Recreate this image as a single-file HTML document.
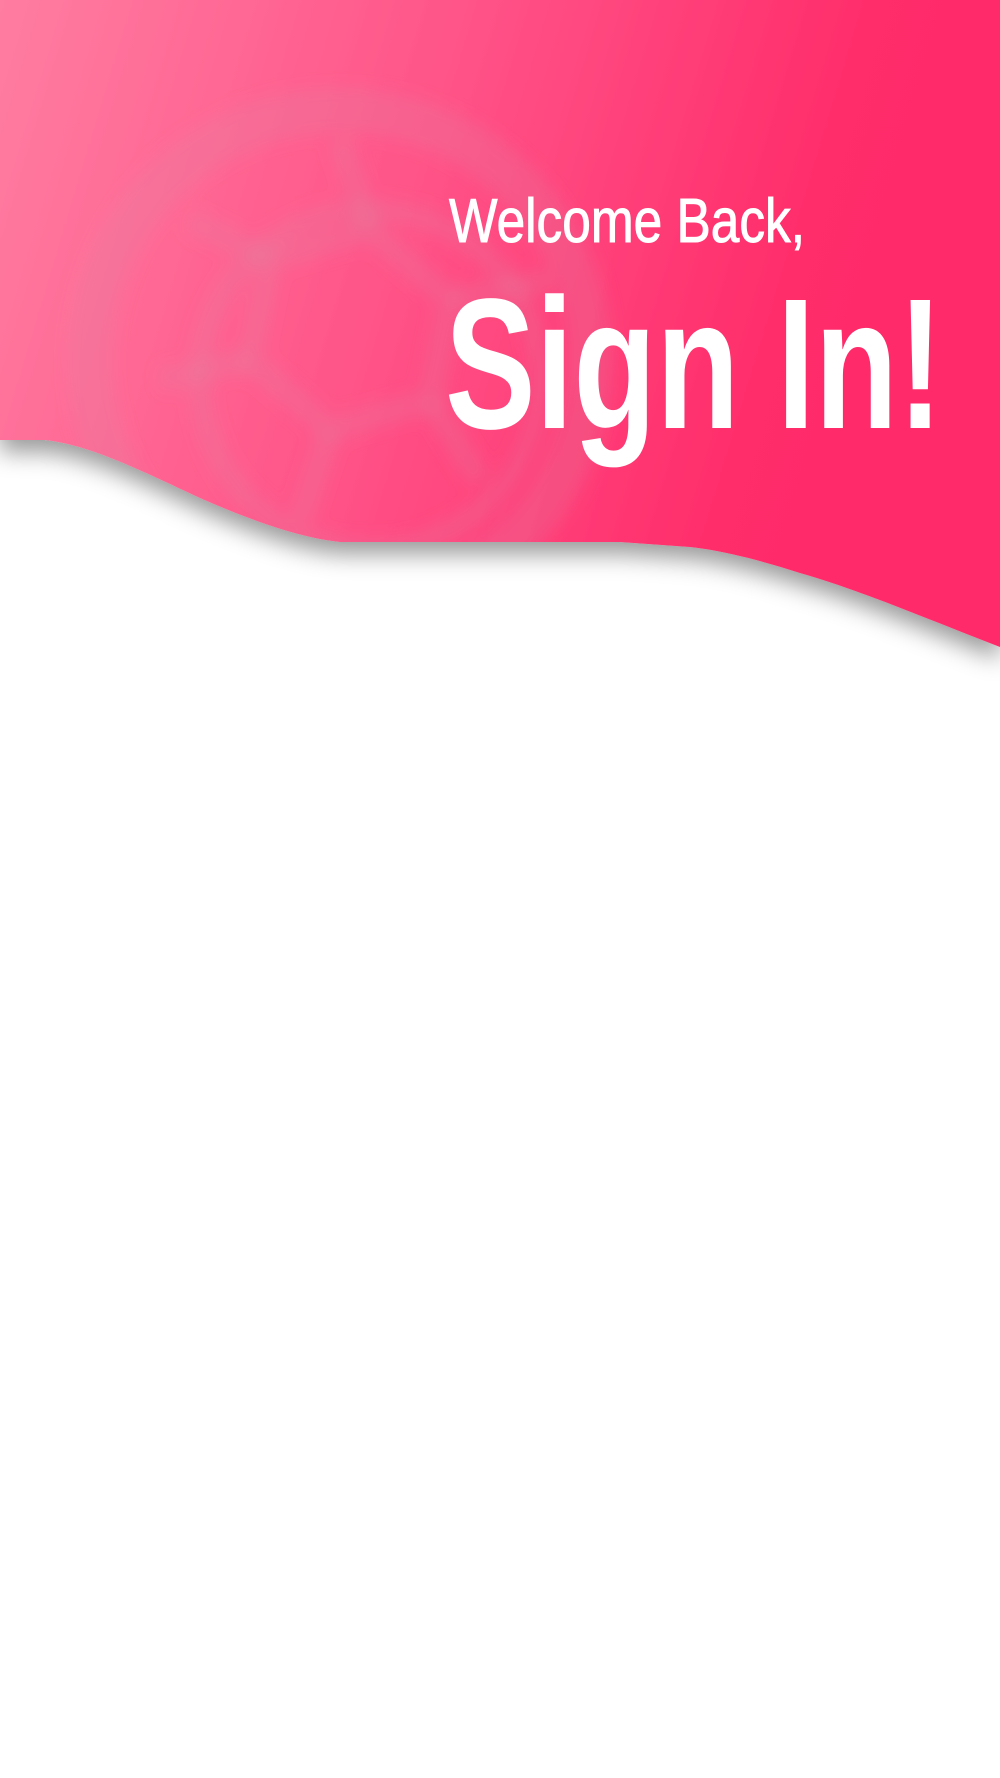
<!DOCTYPE html>
<html><head><meta charset="utf-8"><style>
html,body{margin:0;padding:0;background:#fff;width:1000px;height:1778px;overflow:hidden}
svg{display:block}
</style></head><body>
<svg width="1000" height="1778" viewBox="0 0 1000 1778" xmlns="http://www.w3.org/2000/svg">
<defs>
<linearGradient id="g" x1="0" y1="0" x2="1000" y2="300" gradientUnits="userSpaceOnUse">
<stop offset="0" stop-color="#ff7da1"/>
<stop offset="0.45" stop-color="#ff5287"/>
<stop offset="0.8" stop-color="#ff2d6b"/>
<stop offset="1" stop-color="#ff2a69"/>
</linearGradient>
<filter id="sh" x="-10%" y="-10%" width="120%" height="140%">
<feDropShadow dx="0" dy="12" stdDeviation="12" flood-color="#000" flood-opacity="0.4"/>
</filter>
<filter id="bl"><feGaussianBlur stdDeviation="8"/></filter>
<clipPath id="cp"><path d="M0,0 H1000 V647 C930,620 860,590 800,573 C760,560 720,550 690,547 L620,542 H340 C300,538 250,520 200,498 C140,470 90,445 45,440 L0,440 Z"/></clipPath>
</defs>
<path filter="url(#sh)" fill="url(#g)" d="M0,0 H1000 V647 C930,620 860,590 800,573 C760,560 720,550 690,547 L620,542 H340 C300,538 250,520 200,498 C140,470 90,445 45,440 L0,440 Z"/>
<g clip-path="url(#cp)" filter="url(#bl)" fill="none" stroke="#d98aa5" stroke-opacity="0.22">
<circle cx="340" cy="360" r="250" stroke-width="45"/>
<circle cx="370" cy="380" r="170" stroke-width="22"/>
<path d="M270,260 L370,230 L450,300 L430,400 L330,430 L250,360 Z" stroke-width="24"/>
<path d="M370,230 L340,140 M450,300 L550,280 M430,400 L480,480 M330,430 L300,520 M250,360 L160,380 M270,260 L190,220" stroke-width="24"/>
</g>
<text x="449" y="242" font-family="Liberation Sans, sans-serif" font-size="62" fill="#fff" stroke="#fff" stroke-width="1" textLength="356" lengthAdjust="spacingAndGlyphs">Welcome Back,</text>
<text x="445" y="428" font-family="Liberation Sans, sans-serif" font-weight="bold" font-size="186" fill="#fff" textLength="498" lengthAdjust="spacingAndGlyphs">Sign In!</text>
</svg>
</body></html>
